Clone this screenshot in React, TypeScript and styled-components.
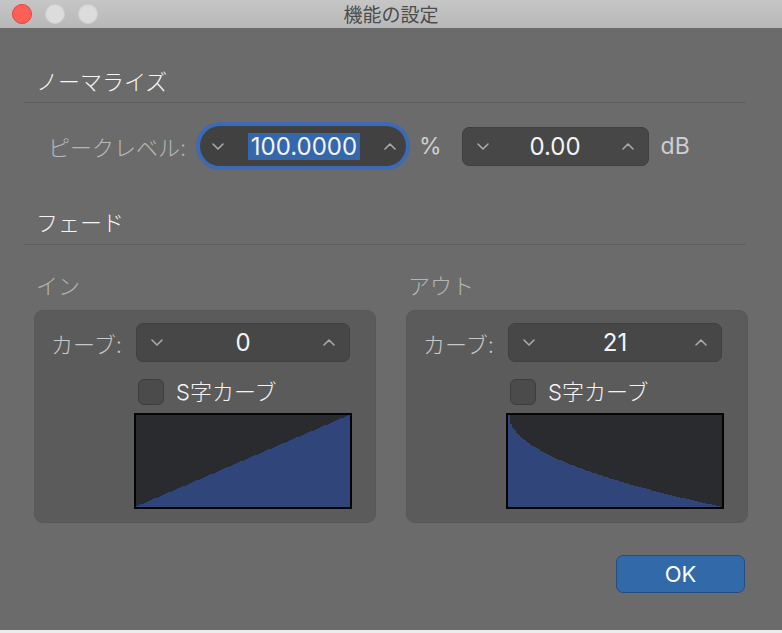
import styled, { createGlobalStyle } from "styled-components";

const GlobalStyle = createGlobalStyle`
  html, body {
    margin: 0;
    padding: 0;
    background: #ececec;
  }
  body {
    font-family: "Inter", "Noto Sans CJK JP", sans-serif;
  }
`;

const Window = styled.div`
  width: 782px;
  height: 630px;
  background: #6b6b6b;
  display: flex;
  flex-direction: column;
  overflow: hidden;
`;

const TitleBar = styled.div`
  height: 28px;
  flex-shrink: 0;
  display: grid;
  grid-template-columns: 1fr auto 1fr;
  align-items: center;
  background: linear-gradient(#c6c6c6, #b8b8b8);
`;

const Lights = styled.div`
  display: flex;
  gap: 13px;
  padding-left: 12px;
`;

const Light = styled.span<{ $color: string; $edge: string }>`
  width: 20px;
  height: 20px;
  border-radius: 50%;
  box-sizing: border-box;
  background: ${(p) => p.$color};
  border: 1px solid ${(p) => p.$edge};
`;

const Title = styled.div`
  font-family: "Noto Sans CJK JP", sans-serif;
  font-size: 19px;
  color: #4c4c4c;
  line-height: 28px;
`;

const Content = styled.div`
  display: flex;
  flex-direction: column;
  padding: 0 36px 0 24px;
  font-weight: 300;
`;

const Heading = styled.div<{ $top: number }>`
  margin-top: ${(p) => p.$top}px;
  padding-left: 12px;
  font-size: 22px;
  line-height: 30px;
  color: #f5f5f5;
`;

const Rule = styled.div<{ $top: number }>`
  margin-top: ${(p) => p.$top}px;
  height: 1px;
  background: #5e5e5e;
`;

const NormalizeRow = styled.div`
  display: flex;
  align-items: center;
  height: 40px;
  margin-top: 23px;
  padding-left: 24px;
`;

const PeakLabel = styled.span`
  width: 152px;
  font-size: 22px;
  color: #b8b8b8;
  white-space: nowrap;
`;

const Stepper = styled.div<{ $width: number; $focused?: boolean }>`
  width: ${(p) => p.$width}px;
  height: ${(p) => (p.$focused ? 40 : 39)}px;
  box-sizing: border-box;
  flex-shrink: 0;
  display: flex;
  align-items: center;
  padding: ${(p) => (p.$focused ? "0 10px 0 12px" : "0 14px")};
  border-radius: ${(p) => (p.$focused ? "20px" : "7px")};
  background: ${(p) => (p.$focused ? "#414141" : "#474747")};
  border: ${(p) => (p.$focused ? "none" : "1px solid #404040")};
  box-shadow: ${(p) => (p.$focused ? "0 0 0 4px #3d6ab4" : "none")};
`;

const Value = styled.div`
  flex: 1;
  text-align: center;
  font-size: 24px;
  font-weight: 400;
  color: #f4f4f4;
`;

const Selected = styled.span`
  background: #3567ad;
  padding: 0 3px;
  line-height: 27px;
  display: inline-block;
`;

const Unit = styled.span<{ $left: number }>`
  margin-left: ${(p) => p.$left}px;
  font-size: 23px;
  font-weight: 400;
  color: #cfcfcf;
`;

const FadeGrid = styled.div`
  display: grid;
  grid-template-columns: 342px 342px;
  column-gap: 30px;
  margin-top: 26px;
  padding-left: 10px;
`;

const ColumnLabel = styled.div`
  padding-left: 2px;
  margin-bottom: 9px;
  font-size: 22px;
  line-height: 30px;
  color: #b4b4b4;
`;

const Panel = styled.div`
  height: 213px;
  box-sizing: border-box;
  padding: 12px 0 15px;
  border-radius: 9px;
  background: #5b5b5b;
  border: 1px solid #575757;
  display: flex;
  flex-direction: column;
`;

const CurveRow = styled.div`
  display: flex;
  align-items: center;
  padding-left: 16px;
`;

const CurveLabel = styled.span`
  width: 85px;
  font-size: 22px;
  color: #c8c8c8;
  white-space: nowrap;
`;

const CheckRow = styled.label`
  display: flex;
  align-items: center;
  gap: 12px;
  margin-top: 17px;
  padding-left: 103px;
`;

const CheckBox = styled.span`
  width: 26px;
  height: 26px;
  box-sizing: border-box;
  border-radius: 6px;
  background: #4b4b4b;
  border: 1px solid #3d3d3d;
`;

const CheckText = styled.span`
  font-size: 22px;
  line-height: 26px;
  color: #f3f3f3;
`;

const Graph = styled.div`
  margin: 8px 0 0 99px;
  width: 218px;
  height: 96px;
  box-sizing: border-box;
  border: 2px solid #050505;
  background: #2a2b2e;
  svg {
    display: block;
  }
`;

const Footer = styled.div`
  display: flex;
  justify-content: flex-end;
  margin-top: 32px;
  padding-right: 1px;
`;

const OkButton = styled.button`
  width: 129px;
  height: 38px;
  border-radius: 7px;
  background: #3169a9;
  border: 1px solid #234e82;
  color: #ffffff;
  font-family: "Inter", sans-serif;
  font-size: 22px;
  padding: 0;
`;

function Chevron({ up }: { up?: boolean }) {
  return (
    <svg width="12" height="7" viewBox="0 0 12 7">
      <path
        d={up ? "M1 6 L6 1 L11 6" : "M1 1 L6 6 L11 1"}
        fill="none"
        stroke="#a9a9a9"
        strokeWidth="1.6"
        strokeLinecap="round"
        strokeLinejoin="round"
      />
    </svg>
  );
}

const W = 214;
const H = 92;

// stepped fill, like the low-res curve preview in the dialog
function stepPath(f: (t: number) => number, step = 2) {
  let d = `M0 ${H}`;
  for (let x = 0; x < W; x += step) {
    const y = (H - f(x / W) * H).toFixed(1);
    d += ` L${x} ${y} L${Math.min(x + step, W)} ${y}`;
  }
  return d + ` L${W} ${H} Z`;
}

const fadeIn = stepPath((t) => t + 2 / W);
const fadeOut = stepPath((t) => 1 - Math.pow(t, 0.5));

function FadePanel({ title, value, curve }: { title: string; value: string; curve: string }) {
  return (
    <div>
      <ColumnLabel>{title}</ColumnLabel>
      <Panel>
        <CurveRow>
          <CurveLabel>カーブ:</CurveLabel>
          <Stepper $width={214}>
            <Chevron />
            <Value>{value}</Value>
            <Chevron up />
          </Stepper>
        </CurveRow>
        <CheckRow>
          <CheckBox />
          <CheckText>S字カーブ</CheckText>
        </CheckRow>
        <Graph>
          <svg width={W} height={H} viewBox={`0 0 ${W} ${H}`} shapeRendering="crispEdges">
            <path d={curve} fill="#30467a" />
          </svg>
        </Graph>
      </Panel>
    </div>
  );
}

export default function App() {
  return (
    <>
      <GlobalStyle />
      <Window>
        <TitleBar>
          <Lights>
            <Light $color="#fd5f57" $edge="#e2463f" />
            <Light $color="#dcdcdc" $edge="#cfcfcf" />
            <Light $color="#dcdcdc" $edge="#cfcfcf" />
          </Lights>
          <Title>機能の設定</Title>
          <div />
        </TitleBar>
        <Content>
          <Heading $top={39}>ノーマライズ</Heading>
          <Rule $top={5} />
          <NormalizeRow>
            <PeakLabel>ピークレベル:</PeakLabel>
            <Stepper $width={206} $focused>
              <Chevron />
              <Value>
                <Selected>100.0000</Selected>
              </Value>
              <Chevron up />
            </Stepper>
            <Unit $left={13}>%</Unit>
            <Unit $left={20} as="div">
              <Stepper $width={187}>
                <Chevron />
                <Value>0.00</Value>
                <Chevron up />
              </Stepper>
            </Unit>
            <Unit $left={12}>dB</Unit>
          </NormalizeRow>
          <Heading $top={42}>フェード</Heading>
          <Rule $top={6} />
          <FadeGrid>
            <FadePanel title="イン" value="0" curve={fadeIn} />
            <FadePanel title="アウト" value="21" curve={fadeOut} />
          </FadeGrid>
          <Footer>
            <OkButton>OK</OkButton>
          </Footer>
        </Content>
      </Window>
    </>
  );
}
